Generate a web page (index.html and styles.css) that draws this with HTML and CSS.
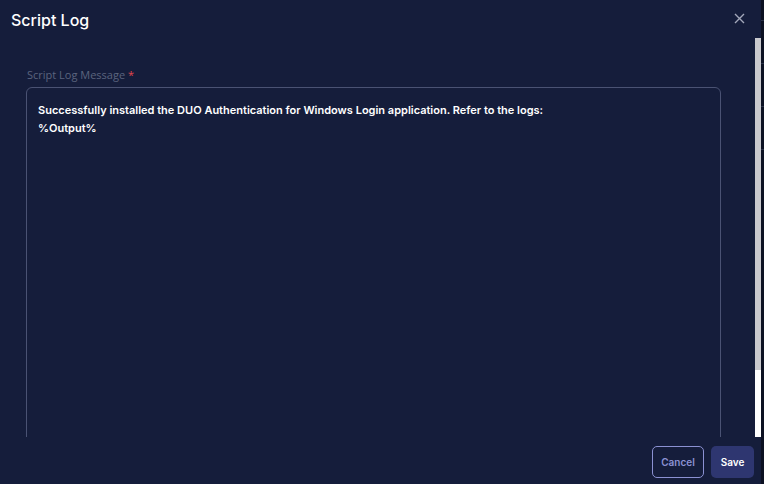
FILE: index.html
```html
<!DOCTYPE html>
<html>
<head>
<meta charset="utf-8">
<link rel="stylesheet" href="styles.css">
</head>
<body>
<div class="page">
  <div class="modal">
    <div class="modal-header">
      <h1 class="modal-title">Script Log</h1>
      <button class="close-btn" aria-label="Close">
        <svg width="11" height="11" viewBox="0 0 11 11"><path d="M1 1L10 10M10 1L1 10" stroke="#a3a8ba" stroke-width="1.4" fill="none"/></svg>
      </button>
    </div>
    <div class="modal-body">
      <div class="body-content">
        <div class="field">
          <label class="field-label">Script Log Message <span class="req">*</span></label>
          <div class="textbox">Successfully installed the DUO Authentication for Windows Login application. Refer to the logs:<br>%Output%</div>
        </div>
      </div>
      <div class="scrollbar">
        <div class="scroll-thumb"></div>
      </div>
    </div>
    <div class="modal-footer">
      <button class="btn btn-outline">Cancel</button>
      <button class="btn btn-primary">Save</button>
    </div>
  </div>
  <div class="backdrop-strip">
    <div class="strip-line"></div>
    <div class="strip-line"></div>
    <div class="strip-line"></div>
    <div class="strip-line"></div>
  </div>
</div>
</body>
</html>
```
FILE: styles.css
```css
* { box-sizing: border-box; }
html, body { margin: 0; padding: 0; }
body {
  width: 764px;
  height: 484px;
  overflow: hidden;
  background: #151d3b;
  font-family: Inter, "Liberation Sans", Arial, sans-serif;
}
.page {
  display: flex;
  width: 764px;
  height: 484px;
}
.modal {
  width: 761px;
  height: 484px;
  display: flex;
  flex-direction: column;
  background: #151d3b;
}
.modal-header {
  height: 38px;
  flex: none;
  display: flex;
  align-items: flex-start;
  justify-content: space-between;
  padding: 9px 16px 0 11px;
}
.modal-title {
  margin: 0;
  font-size: 16px;
  font-weight: 500;
  color: #ffffff;
  line-height: 22px;
}
.close-btn {
  background: none;
  border: 0;
  padding: 0;
  margin-top: 4px;
  width: 11px;
  height: 11px;
  display: flex;
}
.modal-body {
  height: 399px;
  flex: none;
  display: flex;
  overflow: hidden;
}
.body-content {
  flex: 1;
  padding: 29px 34px 0 26px;
  overflow: hidden;
}
.scrollbar {
  width: 6px;
  flex: none;
  background: #ffffff;
  display: flex;
  flex-direction: column;
}
.scroll-thumb {
  height: 332px;
  background: #c9c9ce;
}
.field {
  display: flex;
  flex-direction: column;
}
.field-label {
  font-family: "Open Sans", "Noto Sans", sans-serif;
  font-size: 11px;
  line-height: 16px;
  color: #5b647e;
  padding-left: 1px;
  margin-bottom: 4px;
}
.req { color: #e2474d; }
.textbox {
  border: 1px solid #4a5273;
  border-radius: 6px;
  height: 420px;
  padding: 13px 11px;
  color: #ffffff;
  font-size: 11px;
  font-weight: 600;
  line-height: 18px;
}
.modal-footer {
  flex: 1;
  display: flex;
  justify-content: flex-end;
  align-items: flex-start;
  gap: 7px;
  padding: 9px 7px 0 0;
}
.btn {
  height: 32px;
  border-radius: 5px;
  font-family: Inter, "Liberation Sans", Arial, sans-serif;
  font-size: 10px;
  font-weight: 600;
  padding: 0;
  display: flex;
  align-items: center;
  justify-content: center;
}
.btn-outline {
  width: 52px;
  background: transparent;
  border: 1px solid #8b91d2;
  color: #8b91d2;
}
.btn-primary {
  width: 43px;
  background: #2e3670;
  border: 0;
  color: #ffffff;
}
.backdrop-strip {
  width: 3px;
  height: 484px;
  background: #0c1122;
  display: flex;
  flex-direction: column;
  gap: 42px;
  padding-top: 20px;
}
.strip-line {
  height: 1px;
  background: #2b3247;
}
```
